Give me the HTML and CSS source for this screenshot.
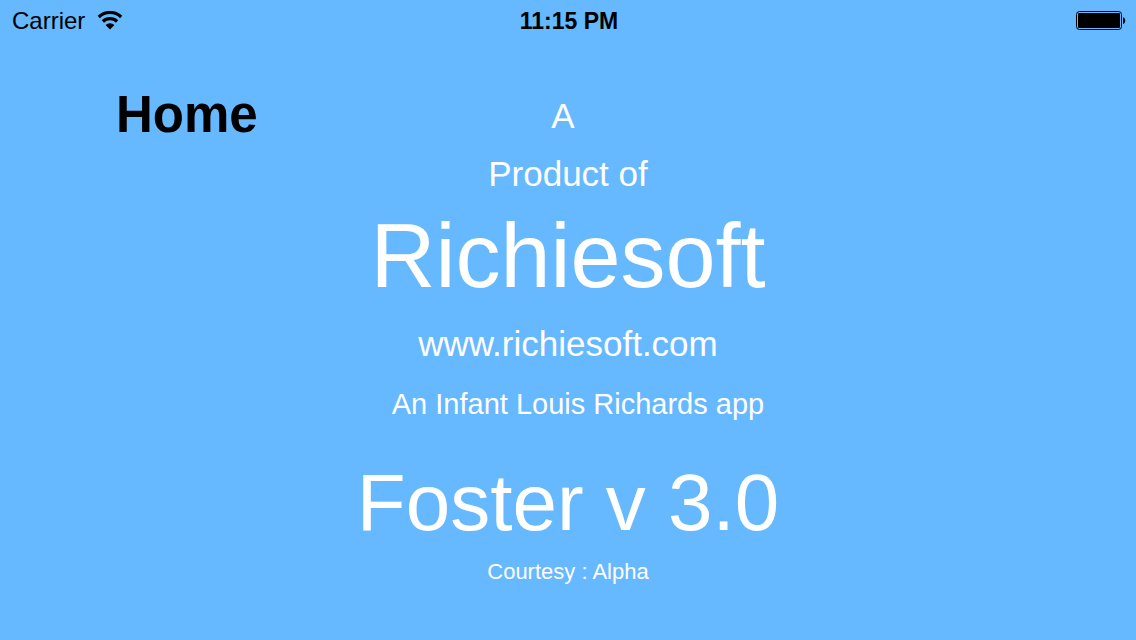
FILE: index.html
```html
<!DOCTYPE html>
<html lang="en">
<head>
<meta charset="utf-8">
<meta name="viewport" content="width=device-width, initial-scale=1">
<title>Foster</title>
<link rel="stylesheet" href="styles.css">
</head>
<body>
<header class="status">
  <div class="carrier"><span>Carrier</span>
    <svg class="wifi" viewBox="0 0 26 20" aria-hidden="true"><g fill="none" stroke="#000" stroke-width="3.2"><path d="M1.8 6a16.1 16.1 0 0 1 22.4 0"/><path d="M5.9 10.5a10.2 10.2 0 0 1 14.2 0"/></g><path d="M13 18.5l-4.4-4.4a6 6 0 0 1 8.8 0z"/></svg>
  </div>
  <time class="clock">11:15 PM</time>
  <svg class="battery" viewBox="0 0 50 20" role="img" aria-label="Battery full"><rect x="0.5" y="0.5" width="45" height="18" rx="3" fill="none" stroke="#000"/><rect x="2" y="2" width="42" height="15" rx="1"/><path d="M47 6.2c3 .6 3 6.2 0 6.8z"/></svg>
</header>
<main class="about">
  <button class="home" type="button">Home</button>
  <div class="credits">
    <p class="line article">A</p>
    <p class="line">Product of</p>
    <h1 class="company">Richiesoft</h1>
    <p class="site">www.richiesoft.com</p>
    <p class="author">An Infant Louis Richards app</p>
    <h2 class="version">Foster v 3.0</h2>
    <p class="courtesy">Courtesy : Alpha</p>
  </div>
</main>
</body>
</html>
```
FILE: styles.css
```css
* { box-sizing: border-box; }
body { margin: 0; min-height: 100vh; background: #66b8ff; color: #fff; font-family: "Liberation Sans", Arial, sans-serif; }
.status { display: grid; grid-template-columns: 1fr auto 1fr; align-items: center; height: 42px; padding: 0 10px 0 12px; color: #000; font-size: 24px; line-height: 42px; }
.carrier { display: flex; align-items: center; gap: 12px; }
.wifi { width: 26px; height: 20px; }
.clock { font-weight: bold; font-size: 23px; }
.battery { width: 50px; height: 20px; justify-self: end; }
.about { display: grid; grid-template-columns: 1fr auto 1fr; align-items: start; padding-top: 43px; }
.home { justify-self: start; margin: 0 0 0 116px; padding: 0; border: 0; background: none; color: #000; font: bold 51px/60px "Liberation Sans", Arial, sans-serif; cursor: pointer; }
.credits { display: flex; flex-direction: column; align-items: center; white-space: nowrap; }
.credits > * { margin: 0; font-weight: normal; }
.line { font-size: 35px; line-height: 58px; }
.credits .article { padding-right: 10px; margin-top: 2px; }
.company { font-size: 90px; line-height: 106px; }
.site { font-size: 35px; line-height: 70px; }
.author { font-size: 29px; line-height: 50px; padding-left: 20px; }
.credits .version { margin-top: 15px; font-size: 80px; line-height: 118px; }
.courtesy { font-size: 22px; line-height: 20px; }
```
